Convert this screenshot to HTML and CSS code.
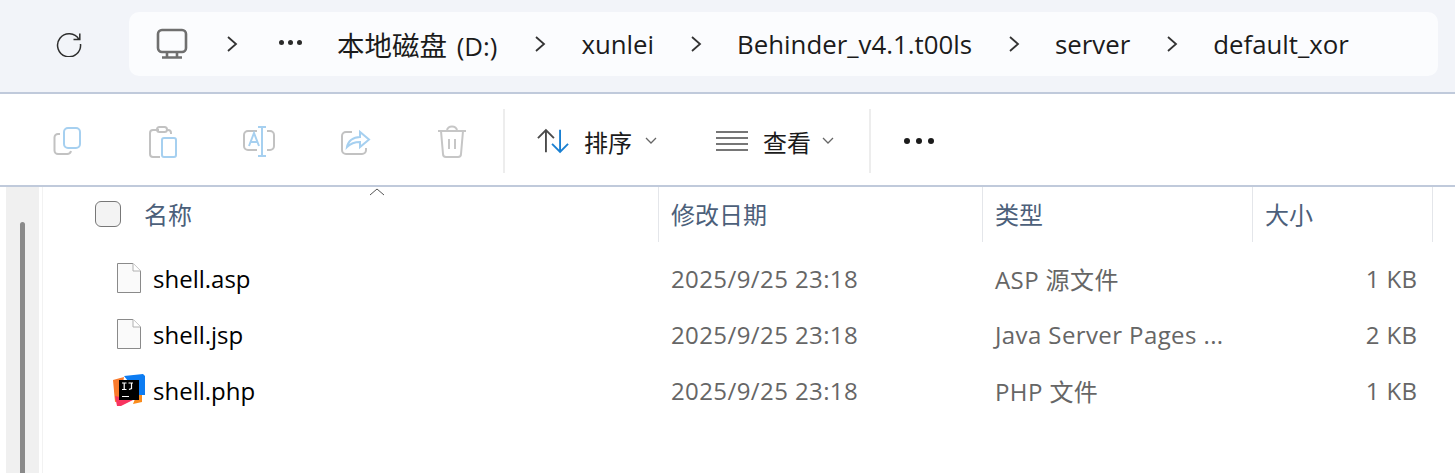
FILE: index.html
```html
<!DOCTYPE html>
<html lang="zh-CN">
<head>
<meta charset="UTF-8">
<title>default_xor</title>
<link rel="stylesheet" href="styles.css">
</head>
<body>
  <header class="topbar">
    <svg class="refresh" width="26" height="26" viewBox="0 0 26 26"><path d="M23 8.500A11.500 11.500 0 1 0 24.500 13M23.800 2.500V8.600H17.500" fill="none" stroke="#2e2e2e" stroke-width="1.500"/></svg>
    <nav class="address">
      <svg class="pc" width="32" height="32" viewBox="0 0 32 32"><rect x="2" y="2" width="28" height="22" rx="4" fill="none" stroke="#6f6f6f" stroke-width="2.600"/><path d="M11 24v5M21 24v5M6 29.500h20" fill="none" stroke="#6f6f6f" stroke-width="2.600"/></svg>
      <svg class="chev" width="12" height="18" viewBox="0 0 12 18"><path d="M2 2l8 7-8 7" fill="none" stroke="#333" stroke-width="1.800"/></svg>
      <span class="crumb-more"><i></i><i></i><i></i></span>
      <span class="crumb crumb-disk"><span class="cjk">本地磁盘</span> (D:)</span>
      <svg class="chev" width="12" height="18" viewBox="0 0 12 18"><path d="M2 2l8 7-8 7" fill="none" stroke="#333" stroke-width="1.800"/></svg>
      <span class="crumb">xunlei</span>
      <svg class="chev" width="12" height="18" viewBox="0 0 12 18"><path d="M2 2l8 7-8 7" fill="none" stroke="#333" stroke-width="1.800"/></svg>
      <span class="crumb">Behinder_v4.1.t00ls</span>
      <svg class="chev" width="12" height="18" viewBox="0 0 12 18"><path d="M2 2l8 7-8 7" fill="none" stroke="#333" stroke-width="1.800"/></svg>
      <span class="crumb">server</span>
      <svg class="chev" width="12" height="18" viewBox="0 0 12 18"><path d="M2 2l8 7-8 7" fill="none" stroke="#333" stroke-width="1.800"/></svg>
      <span class="crumb">default_xor</span>
    </nav>
  </header>

  <section class="toolbar">
    <div class="tool-group">
      <svg class="tool" width="30" height="32" viewBox="0 0 30 32"><path d="M7 8H5a3.500 3.500 0 0 0-3.500 3.500v13A3.500 3.500 0 0 0 5 28h9a4 4 0 0 0 4-3" fill="none" stroke="#c2c2c2" stroke-width="2"/><rect x="11" y="2" width="16" height="20" rx="4" fill="none" stroke="#a6d0f0" stroke-width="2"/></svg>
      <svg class="tool" width="30" height="34" viewBox="0 0 30 34"><path d="M11 5H5a3 3 0 0 0-3 3v21a3 3 0 0 0 3 3h7M23 9V8a3 3 0 0 0-3-3h-1" fill="none" stroke="#c2c2c2" stroke-width="2"/><rect x="9" y="2" width="10" height="5" rx="2.500" fill="none" stroke="#c2c2c2" stroke-width="2"/><rect x="14" y="13" width="14" height="19" rx="2" fill="none" stroke="#a6d0f0" stroke-width="2"/></svg>
      <svg class="tool" width="33" height="32" viewBox="1 0 33 32"><path d="M15 5H6a4 4 0 0 0-4 4v11a4 4 0 0 0 4 4h9M25 5h3a4 4 0 0 1 4 4v11a4 4 0 0 1-4 4h-3" fill="none" stroke="#c2c2c2" stroke-width="2"/><path d="M16 1h8M16 30h8M20 1v29M7 20l5-13 5 13M9 16h6" fill="none" stroke="#a6d0f0" stroke-width="2"/></svg>
      <svg class="tool" width="31" height="32" viewBox="1 0 31 32"><path d="M12 6H6a4 4 0 0 0-4 4v14a4 4 0 0 0 4 4h16a4 4 0 0 0 4-4v-2" fill="none" stroke="#c2c2c2" stroke-width="2"/><path d="M7 21c1-6 6-10 13-10V6l9 7.500-9 7.500v-5c-5 0-9 1-13 5z" fill="none" stroke="#a6d0f0" stroke-width="2"/></svg>
      <svg class="tool" width="30" height="34" viewBox="0 0 30 34"><path d="M1 6h28M4 6l2 23a3 3 0 0 0 3 3h12a3 3 0 0 0 3-3l2-23M10 6c0-6 10-6 10 0M12 14v10M18 14v10" fill="none" stroke="#c6c6c6" stroke-width="2"/></svg>
    </div>
    <div class="tool-menu">
      <button class="menu-btn menu-sort">
        <svg width="32" height="26" viewBox="0 0 34 26"><path d="M1 10l8.500-8.500L18 10M9.500 2v23" fill="none" stroke="#4a4a4a" stroke-width="2"/><path d="M16 16l8.500 8.500L33 16M24.500 1v23" fill="none" stroke="#1a80d2" stroke-width="2"/></svg>
        <span>排序</span>
        <svg width="12" height="8" viewBox="0 0 12 8"><path d="M1 1l5 5 5-5" fill="none" stroke="#666" stroke-width="1.300"/></svg>
      </button>
      <button class="menu-btn menu-view">
        <svg width="32" height="20" viewBox="0 0 32 20"><path d="M0 1h32M0 7h32M0 13h32M0 19h32" fill="none" stroke="#4a4a4a" stroke-width="1.400"/></svg>
        <span>查看</span>
        <svg width="12" height="8" viewBox="0 0 12 8"><path d="M1 1l5 5 5-5" fill="none" stroke="#666" stroke-width="1.300"/></svg>
      </button>
    </div>
    <div class="tool-dots"><i></i><i></i><i></i></div>
  </section>

  <main class="content">
    <aside class="nav-strip"><div class="nav-thumb"></div></aside>
    <div class="files">
      <svg class="sort-caret" width="16" height="8" viewBox="0 0 16 8"><path d="M1 7l7-6 7 6" fill="none" stroke="#555" stroke-width="1"/></svg>
      <div class="row head">
        <div class="cell name"><span class="check"></span><span>名称</span></div>
        <div class="cell">修改日期</div>
        <div class="cell">类型</div>
        <div class="cell">大小</div>
      </div>
      <div class="row item">
        <div class="cell name"><svg class="file" width="24" height="30" viewBox="0 0 24 30"><path d="M.5.500H16L23.500 8v21.500H.5z" fill="#fafafa" stroke="#8a8a8a"/><path d="M16 .5V8h7.500" fill="#fff" stroke="#b0b0b0"/></svg><span class="fname">shell.asp</span></div>
        <div class="cell">2025/9/25 23:18</div>
        <div class="cell">ASP 源文件</div>
        <div class="cell size">1 KB</div>
      </div>
      <div class="row item">
        <div class="cell name"><svg class="file" width="24" height="30" viewBox="0 0 24 30"><path d="M.5.500H16L23.500 8v21.500H.5z" fill="#fafafa" stroke="#8a8a8a"/><path d="M16 .5V8h7.500" fill="#fff" stroke="#b0b0b0"/></svg><span class="fname">shell.jsp</span></div>
        <div class="cell">2025/9/25 23:18</div>
        <div class="cell">Java Server Pages ...</div>
        <div class="cell size">2 KB</div>
      </div>
      <div class="row item">
        <div class="cell name">
          <svg class="file-app" width="33" height="33" viewBox="0 0 33 33">
            <path d="M0 6l11-3-4 24-5 1z" fill="#f97a2b"/>
            <path d="M2 22l18 4-12 6-4 0z" fill="#f8345f"/>
            <path d="M24 20h5v8l-9 2z" fill="#f98b1c"/>
            <path d="M11 2l19-2 2 2v19l-6 0z" fill="#0d7cf2"/>
            <rect x="6" y="6" width="20" height="20" fill="#000"/>
            <path d="M9 9h4.500M11.200 9v6.500M9 15.500h4.500M15.500 9h4.500M18.500 9v5.500L16 15.500M9 22.500h7" fill="none" stroke="#fff" stroke-width="1.200"/>
          </svg>
          <span class="fname">shell.php</span>
        </div>
        <div class="cell">2025/9/25 23:18</div>
        <div class="cell">PHP 文件</div>
        <div class="cell size">1 KB</div>
      </div>
    </div>
  </main>
</body>
</html>
```

FILE: styles.css
```css
* {
  box-sizing: border-box;
}

html, body {
  height: 100%;
}

body {
  margin: 0;
  background-color: #fff;
  color: #1b1b1b;
  font-family: "Open Sans", "Noto Sans CJK SC", sans-serif;
  font-size: 24px;
  overflow: hidden;
}

.topbar {
  height: 94px;
  padding: 12px 17px 0 56px;
  display: flex;
  align-items: flex-start;
  background-color: #f2f4f9;
  border-bottom: 2px solid #c0cadb;
}

.refresh {
  margin-top: 19px;
  flex: none;
}

.address {
  flex: 1;
  height: 64px;
  margin-left: 47px;
  padding-left: 27px;
  display: flex;
  align-items: center;
  background-color: #fbfcfe;
  border-radius: 10px;
}

.pc {
  flex: none;
}

.chev {
  flex: none;
  margin-left: 36px;
}

.pc + .chev {
  margin-left: 38px;
}

.chev + .crumb {
  margin-left: 35px;
}

.crumb {
  padding-bottom: 1px;
  font-size: 25.8px;
  white-space: nowrap;
}

.cjk {
  margin-right: 3px;
  font-size: 27.5px;
}

.crumb-more {
  margin-left: 41px;
  padding-bottom: 4px;
  display: flex;
  gap: 4px;
}

.crumb-more i {
  width: 5px;
  height: 5px;
  border-radius: 50%;
  background-color: #2a2a2a;
}

.crumb-more + .crumb-disk {
  margin-left: 35px;
}

.crumb-disk {
  margin-right: 1px;
}

.toolbar {
  height: 93px;
  display: flex;
  align-items: center;
  padding: 3px 0 0 53px;
  border-bottom: 2px solid #c0cadb;
}

.tool-group {
  width: 450px;
  margin-top: 2px;
  display: flex;
  align-items: center;
  gap: 65px;
  flex: none;
}

.tool {
  flex: none;
  overflow: visible;
}

.tool-menu {
  height: 64px;
  display: flex;
  align-items: center;
  padding-left: 32px;
  width: 368px;
  border-left: 2px solid #ededed;
  border-right: 2px solid #ededed;
}

.menu-btn {
  padding: 0;
  border: none;
  background: none;
  display: flex;
  align-items: center;
  color: #1b1b1b;
  font: inherit;
}

.menu-sort span {
  margin: 0 13px 0 15px;
}

.menu-view {
  margin-left: 59px;
}

.menu-view span {
  margin: 0 11px 0 15px;
}

.tool-dots {
  margin-left: 33px;
  display: flex;
  gap: 6px;
}

.tool-dots i {
  width: 6px;
  height: 6px;
  border-radius: 50%;
  background-color: #1b1b1b;
}

.content {
  display: flex;
  height: 286px;
}

.nav-strip {
  width: 33px;
  margin: 0 3px 0 6px;
  padding: 35px 0 0 14px;
  background-color: #f0f0f0;
  flex: none;
}

.nav-thumb {
  width: 5px;
  height: 100%;
  background-color: #8a8a8a;
  border-radius: 3px 3px 0 0;
}

.files {
  flex: 1;
  position: relative;
  border-left: 1px solid #f2f2f2;
}

.sort-caret {
  position: absolute;
  left: 326px;
  top: 1px;
}

.row {
  display: grid;
  grid-template-columns: 616px 324px 270px 180px;
}

.head {
  height: 55px;
  color: #4c607a;
  margin-bottom: 8px;
}

.head .cell {
  border-right: 1px solid #e4e6ea;
  padding-bottom: 2px;
}

.head .cell + .cell {
  padding-left: 12px;
}

.item {
  height: 56px;
  color: #666;
}

.cell {
  display: flex;
  align-items: center;
  white-space: nowrap;
}

.item .cell + .cell {
  padding-left: 12px;
  letter-spacing: 0.4px;
}

.name {
  padding-left: 52px;
}

.check {
  width: 26px;
  height: 26px;
  margin-right: 23px;
  background-color: #f3f3f3;
  border: 1px solid #777;
  border-radius: 6px;
}

.file {
  margin-left: 22px;
  margin-right: 12px;
  flex: none;
}

.file-app {
  margin-left: 18px;
  margin-right: 7px;
  flex: none;
}

.fname {
  color: #000;
}

.item .size {
  justify-content: flex-end;
  padding-right: 15.5px;
  letter-spacing: 0;
}
```
